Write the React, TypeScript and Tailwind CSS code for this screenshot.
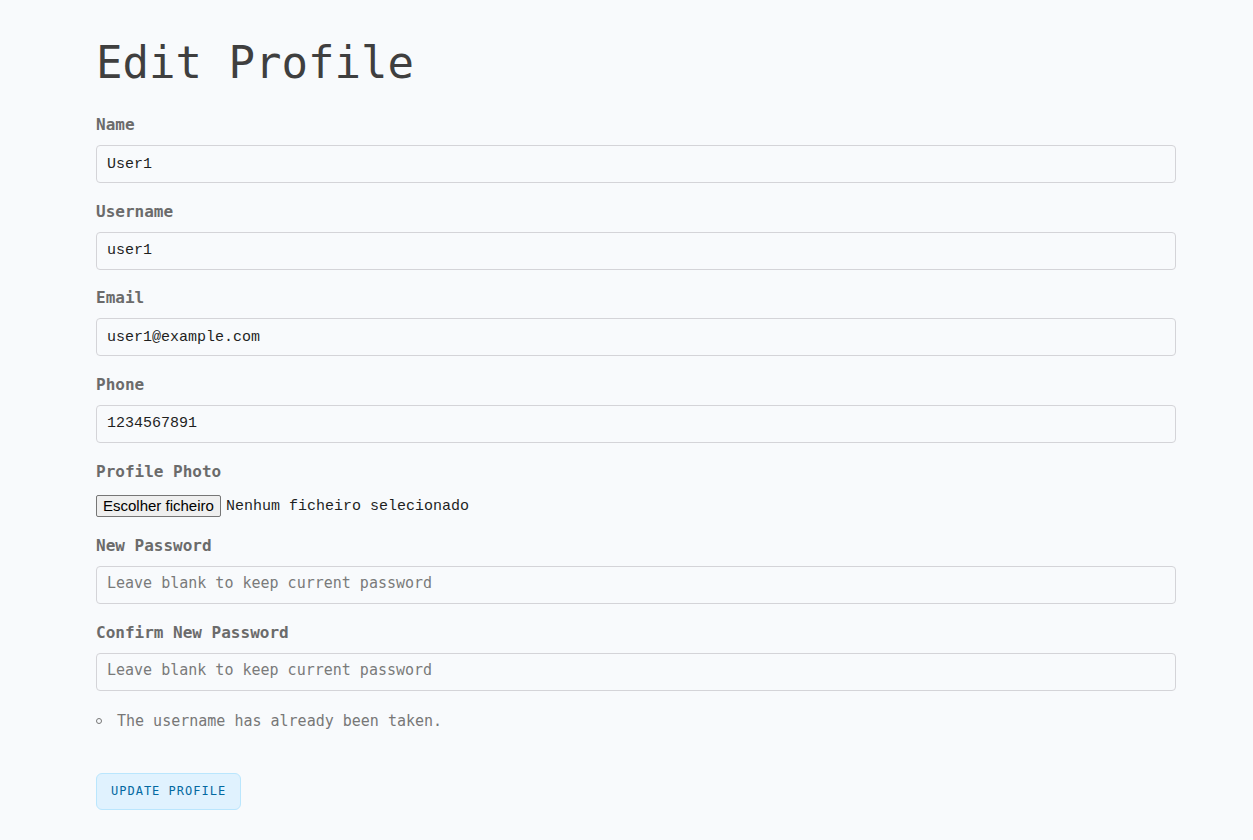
import React from "react";

const fields = [
    { label: "Name", value: "User1" },
    { label: "Username", value: "user1" },
    { label: "Email", value: "user1@example.com" },
    { label: "Phone", value: "1234567891" },
];

const labelCls = "block text-[16px] leading-6 font-bold text-[#6b6b6b] font-['DejaVu_Sans_Mono',monospace] mb-2";
const inputCls = "block w-full h-[38px] px-[10px] border border-[#d4d4d8] rounded-[4px] bg-[#f8fafc] text-[15px] text-[#1f1f1f] font-['Liberation_Mono',monospace] outline-none placeholder:text-[#7a7a7a] placeholder:font-['DejaVu_Sans_Mono',monospace]";

const App = () => {
    return (
        <div className="min-h-screen bg-[#f8fafc] pt-[37px] pl-[96px]">
            <div className="w-[1080px]">
                <h1 className="text-[44px] leading-[52px] font-normal text-[#3f3f3f] font-['DejaVu_Sans_Mono',monospace] mb-[24px]">
                    Edit Profile
                </h1>

                {fields.map((f) => (
                    <div key={f.label} className="mb-[16.67px]">
                        <label className={labelCls}>{f.label}</label>
                        <input className={inputCls} defaultValue={f.value} />
                    </div>
                ))}

                <div className="mb-[17px]">
                    <label className="block text-[16px] leading-6 font-bold text-[#6b6b6b] font-['DejaVu_Sans_Mono',monospace] mb-[11px]">
                        Profile Photo
                    </label>
                    <div className="flex items-center h-[22px]">
                        <button className="h-[22px] px-[6px] border border-[#767676] rounded-[2px] bg-[#efefef] text-[15px] leading-[20px] text-black font-['Liberation_Sans',Arial,sans-serif]">
                            Escolher ficheiro
                        </button>
                        <span className="ml-[5px] mt-[4px] text-[15px] text-[#1f1f1f] font-['Liberation_Mono',monospace]">
                            Nenhum ficheiro selecionado
                        </span>
                    </div>
                </div>

                <div className="mb-[17px]">
                    <label className={labelCls}>New Password</label>
                    <input type="password" className={inputCls} placeholder="Leave blank to keep current password" />
                </div>

                <div className="mb-[18px]">
                    <label className={labelCls}>Confirm New Password</label>
                    <input type="password" className={inputCls} placeholder="Leave blank to keep current password" />
                </div>

                <ul className="mb-[40px]">
                    <li className="flex items-center gap-[15px] text-[15px] leading-6 text-[#777777] font-['DejaVu_Sans_Mono',monospace]">
                        <span className="w-[6px] h-[6px] rounded-full border border-[#777777]" />
                        The username has already been taken.
                    </li>
                </ul>

                <button className="h-[37px] px-[14px] rounded-[6px] border border-[#bae6fd] bg-[#e0f2fe] text-[12px] tracking-[1px] text-[#0369a1] font-['DejaVu_Sans_Mono',monospace]">
                    UPDATE PROFILE
                </button>
            </div>
        </div>
    );
};

export default App;
